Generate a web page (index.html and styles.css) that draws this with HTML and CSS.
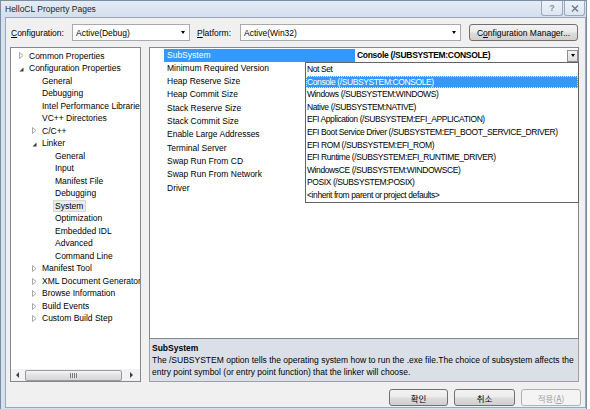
FILE: index.html
```html
<!DOCTYPE html>
<html>
<head>
<meta charset="utf-8">
<link rel="stylesheet" href="styles.css">
</head>
<body>
<div class="window">
  <div class="titlebar">
    <span class="title">HelloCL Property Pages</span>
    <div class="caption-btns">
      <span class="cbtn help">?</span>
      <span class="cbtn close"><svg width="8" height="7" viewBox="0 0 8 7"><path d="M1 0.5 L7 6.5 M7 0.5 L1 6.5" stroke="#6a7a90" stroke-width="1.4" fill="none"/></svg></span>
    </div>
  </div>
  <div class="client">
    <div class="config-row">
      <span class="lbl lbl-config"><u>C</u>onfiguration:</span>
      <div class="combo combo-config"><span>Active(Debug)</span><span class="arrow"></span></div>
      <span class="lbl lbl-platform"><u>P</u>latform:</span>
      <div class="combo combo-platform"><span>Active(Win32)</span><span class="arrow"></span></div>
      <div class="btn btn-cfgmgr">C<u>o</u>nfiguration Manager...</div>
    </div>

    <div class="main">
      <div class="tree">
        <div class="tree-items">
          <div class="ti l0"><span class="tg"><svg width="5" height="7" viewBox="0 0 5 7"><path d="M0.5 0.5 L4 3.5 L0.5 6.5 Z" fill="#fff" stroke="#a8a8a8"/></svg></span><span>Common Properties</span></div>
          <div class="ti l0"><span class="tg"><svg class="exp" width="5" height="5" viewBox="0 0 5 5"><path d="M4.5 0.5 L4.5 4.5 L0.5 4.5 Z" fill="#3a3a3a"/></svg></span><span>Configuration Properties</span></div>
          <div class="ti l1"><span class="tg"></span><span>General</span></div>
          <div class="ti l1"><span class="tg"></span><span>Debugging</span></div>
          <div class="ti l1"><span class="tg"></span><span>Intel Performance Libraries</span></div>
          <div class="ti l1"><span class="tg"></span><span>VC++ Directories</span></div>
          <div class="ti l1"><span class="tg"><svg width="5" height="7" viewBox="0 0 5 7"><path d="M0.5 0.5 L4 3.5 L0.5 6.5 Z" fill="#fff" stroke="#a8a8a8"/></svg></span><span>C/C++</span></div>
          <div class="ti l1"><span class="tg"><svg class="exp" width="5" height="5" viewBox="0 0 5 5"><path d="M4.5 0.5 L4.5 4.5 L0.5 4.5 Z" fill="#3a3a3a"/></svg></span><span>Linker</span></div>
          <div class="ti l2"><span class="tg"></span><span>General</span></div>
          <div class="ti l2"><span class="tg"></span><span>Input</span></div>
          <div class="ti l2"><span class="tg"></span><span>Manifest File</span></div>
          <div class="ti l2"><span class="tg"></span><span>Debugging</span></div>
          <div class="ti l2"><span class="tg"></span><span class="sel">System</span></div>
          <div class="ti l2"><span class="tg"></span><span>Optimization</span></div>
          <div class="ti l2"><span class="tg"></span><span>Embedded IDL</span></div>
          <div class="ti l2"><span class="tg"></span><span>Advanced</span></div>
          <div class="ti l2"><span class="tg"></span><span>Command Line</span></div>
          <div class="ti l1"><span class="tg"><svg width="5" height="7" viewBox="0 0 5 7"><path d="M0.5 0.5 L4 3.5 L0.5 6.5 Z" fill="#fff" stroke="#a8a8a8"/></svg></span><span>Manifest Tool</span></div>
          <div class="ti l1"><span class="tg"><svg width="5" height="7" viewBox="0 0 5 7"><path d="M0.5 0.5 L4 3.5 L0.5 6.5 Z" fill="#fff" stroke="#a8a8a8"/></svg></span><span>XML Document Generator</span></div>
          <div class="ti l1"><span class="tg"><svg width="5" height="7" viewBox="0 0 5 7"><path d="M0.5 0.5 L4 3.5 L0.5 6.5 Z" fill="#fff" stroke="#a8a8a8"/></svg></span><span>Browse Information</span></div>
          <div class="ti l1"><span class="tg"><svg width="5" height="7" viewBox="0 0 5 7"><path d="M0.5 0.5 L4 3.5 L0.5 6.5 Z" fill="#fff" stroke="#a8a8a8"/></svg></span><span>Build Events</span></div>
          <div class="ti l1"><span class="tg"><svg width="5" height="7" viewBox="0 0 5 7"><path d="M0.5 0.5 L4 3.5 L0.5 6.5 Z" fill="#fff" stroke="#a8a8a8"/></svg></span><span>Custom Build Step</span></div>
        </div>
        <div class="hscroll">
          <span class="sb-arrow sb-left"><span class="tri-l"></span></span>
          <span class="sb-thumb"><span class="grip"></span></span>
          <span class="sb-arrow sb-right"><span class="tri-r"></span></span>
        </div>
      </div>

      <div class="right">
        <div class="grid">
          <div class="prow selrow"><span class="gutter"></span><span class="pname">SubSystem</span><span class="pval"><b class="valtext">Console (/SUBSYSTEM:CONSOLE)</b><span class="ddbtn"><span class="arrow"></span></span></span></div>
          <div class="prow"><span class="gutter"></span><span class="pname">Minimum Required Version</span><span class="pval"></span></div>
          <div class="prow"><span class="gutter"></span><span class="pname">Heap Reserve Size</span><span class="pval"></span></div>
          <div class="prow"><span class="gutter"></span><span class="pname">Heap Commit Size</span><span class="pval"></span></div>
          <div class="prow"><span class="gutter"></span><span class="pname">Stack Reserve Size</span><span class="pval"></span></div>
          <div class="prow"><span class="gutter"></span><span class="pname">Stack Commit Size</span><span class="pval"></span></div>
          <div class="prow"><span class="gutter"></span><span class="pname">Enable Large Addresses</span><span class="pval"></span></div>
          <div class="prow"><span class="gutter"></span><span class="pname">Terminal Server</span><span class="pval"></span></div>
          <div class="prow"><span class="gutter"></span><span class="pname">Swap Run From CD</span><span class="pval"></span></div>
          <div class="prow"><span class="gutter"></span><span class="pname">Swap Run From Network</span><span class="pval"></span></div>
          <div class="prow"><span class="gutter"></span><span class="pname">Driver</span><span class="pval"></span></div>

          <div class="ddlist">
            <div class="dditem">Not Set</div>
            <div class="dditem hl">Console (/SUBSYSTEM:CONSOLE)</div>
            <div class="dditem">Windows (/SUBSYSTEM:WINDOWS)</div>
            <div class="dditem">Native (/SUBSYSTEM:NATIVE)</div>
            <div class="dditem">EFI Application (/SUBSYSTEM:EFI_APPLICATION)</div>
            <div class="dditem">EFI Boot Service Driver (/SUBSYSTEM:EFI_BOOT_SERVICE_DRIVER)</div>
            <div class="dditem">EFI ROM (/SUBSYSTEM:EFI_ROM)</div>
            <div class="dditem">EFI Runtime (/SUBSYSTEM:EFI_RUNTIME_DRIVER)</div>
            <div class="dditem">WindowsCE (/SUBSYSTEM:WINDOWSCE)</div>
            <div class="dditem">POSIX (/SUBSYSTEM:POSIX)</div>
            <div class="dditem">&lt;inherit from parent or project defaults&gt;</div>
          </div>
        </div>
        <div class="desc">
          <div class="desc-title">SubSystem</div>
          <div class="desc-text">The /SUBSYSTEM option tells the operating system how to run the .exe file.The choice of subsystem affects the<br>entry point symbol (or entry point function) that the linker will choose.</div>
        </div>
      </div>
    </div>

    <div class="dlg-btns">
      <div class="btn kbtn ok">확인</div>
      <div class="btn kbtn cancel">취소</div>
      <div class="btn kbtn apply disabled">적용(<u>A</u>)</div>
    </div>
  </div>
</div>
</body>
</html>
```
FILE: styles.css
```css
html, body {
  margin: 0;
  padding: 0;
}
body {
  width: 590px;
  height: 409px;
  overflow: hidden;
  background: #ffffff;
  font-family: "Liberation Sans", Arial, sans-serif;
  font-size: 8.5px;
  color: #000;
}
.window {
  width: 587px;
  height: 409px;
  box-sizing: border-box;
  border: 1px solid #7c8da3;
  border-bottom: none;
  background: #d6e1ee;
  display: flex;
  flex-direction: column;
}
.titlebar {
  height: 16px;
  display: flex;
  align-items: flex-start;
  background: linear-gradient(#e4ecf5, #d3dfec);
}
.title {
  margin-left: 4px;
  line-height: 16px;
  color: #1e1e1e;
}
.caption-btns {
  margin-left: auto;
  margin-right: 1px;
  display: flex;
  gap: 1px;
}
.cbtn {
  height: 15px;
  box-sizing: border-box;
  border: 1px solid #98a8bd;
  border-top: none;
  border-radius: 0 0 3px 3px;
  background: linear-gradient(#eef3f9, #dde6f1);
  display: flex;
  align-items: center;
  justify-content: center;
}
.help {
  width: 22px;
  font-weight: bold;
  font-size: 9px;
  color: #8090a6;
}
.close {
  width: 21px;
}
.client {
  margin-left: 4px;
  margin-bottom: 1px;
  width: 581px;
  flex: 1;
  box-sizing: border-box;
  border: 1px solid #9aa8ba;
  background: #f0f0f0;
  display: flex;
  flex-direction: column;
}
.config-row {
  display: flex;
  align-items: center;
  margin-top: 6px;
  height: 17px;
}
.lbl-config {
  margin-left: 5px;
  width: 61px;
}
.lbl-platform {
  margin-left: 7px;
  width: 43px;
}
.combo {
  height: 17px;
  box-sizing: border-box;
  border: 1px solid #a7a9ae;
  background: #fff;
  display: flex;
  align-items: center;
  padding-left: 3px;
}
.combo-config { width: 118px; }
.combo-platform { width: 221px; }
.combo .arrow {
  margin-left: auto;
  margin-right: 4px;
}
.arrow {
  width: 0;
  height: 0;
  border-left: 2.5px solid transparent;
  border-right: 2.5px solid transparent;
  border-top: 3px solid #000;
}
.btn {
  height: 17px;
  box-sizing: border-box;
  border: 1px solid #707070;
  border-radius: 3px;
  background: linear-gradient(#f3f3f3 0%, #ebebeb 48%, #dddddd 52%, #cfcfcf 100%);
  display: flex;
  align-items: center;
  justify-content: center;
}
.btn-cfgmgr {
  margin-left: 8px;
  width: 109px;
}
.main {
  display: flex;
  margin-top: 6px;
  height: 335px;
}
.tree {
  margin-left: 4px;
  width: 131px;
  height: 335px;
  box-sizing: border-box;
  border: 1px solid #828790;
  background: #fff;
  display: flex;
  flex-direction: column;
}
.tree-items {
  flex: 1;
  overflow: hidden;
  padding-top: 1.5px;
}
.ti {
  height: 12.52px;
  line-height: 12.52px;
  white-space: nowrap;
  display: flex;
  align-items: center;
}
.ti.l0 { padding-left: 8px; }
.ti.l1 { padding-left: 21px; }
.ti.l2 { padding-left: 34px; }
.tg {
  width: 10px;
  flex: none;
  display: flex;
  align-items: center;
}
.tg svg { display: block; }
.tg svg.exp { margin-top: 2px; }
.sel {
  line-height: 10px;
  padding: 0 2px 0 1px;
  margin-left: -2px;
  border: 1px solid #d6d6d6;
  background: #ebebeb;
}
.hscroll {
  height: 12px;
  flex: none;
  display: flex;
  align-items: center;
  background: #f2f2f2;
}
.sb-arrow {
  display: flex;
  align-items: center;
  justify-content: center;
  height: 12px;
}
.sb-left { width: 13px; }
.sb-right { flex: 1; }
.tri-l {
  width: 0; height: 0;
  border-top: 3px solid transparent;
  border-bottom: 3px solid transparent;
  border-right: 3px solid #404040;
}
.tri-r {
  width: 0; height: 0;
  border-top: 3px solid transparent;
  border-bottom: 3px solid transparent;
  border-left: 3px solid #404040;
}
.sb-thumb {
  margin-left: 1px;
  width: 97px;
  height: 11px;
  box-sizing: border-box;
  border: 1px solid #9a9a9a;
  border-radius: 2px;
  background: linear-gradient(#f4f4f4, #e2e2e2 50%, #d6d6d6);
  display: flex;
  align-items: center;
  justify-content: center;
}
.grip {
  width: 7px;
  height: 5px;
  background: repeating-linear-gradient(90deg, #7a7a7a 0 1px, transparent 1px 2px);
}
.right {
  margin-left: 8px;
  width: 430px;
  display: flex;
  flex-direction: column;
}
.grid {
  position: relative;
  height: 292px;
  box-sizing: border-box;
  border: 1px solid #828790;
  background: #fff;
  padding-top: 0.5px;
}
.prow {
  display: flex;
  height: 13.33px;
  line-height: 13.33px;
}
.gutter {
  width: 14px;
  flex: none;
}
.pname {
  width: 191px;
  flex: none;
  box-sizing: border-box;
  padding-left: 3px;
  white-space: nowrap;
  overflow: hidden;
}
.pval {
  flex: 1;
  position: relative;
  padding-left: 2px;
  white-space: nowrap;
}
.valtext {
  letter-spacing: -0.3px;
}
.selrow .pname {
  background: #3399ff;
  color: #fff;
}
.ddbtn {
  position: absolute;
  right: 0;
  top: 1px;
  width: 11px;
  height: 12px;
  box-sizing: border-box;
  border: 1px solid #8d8d8d;
  background: linear-gradient(#f4f4f4, #dcdcdc);
  display: flex;
  align-items: center;
  justify-content: center;
}
.ddlist {
  position: absolute;
  left: 155px;
  top: 14px;
  width: 274px;
  height: 141px;
  box-sizing: border-box;
  border: 1px solid #646464;
  background: #fff;
  z-index: 2;
}
.dditem {
  height: 12.6px;
  line-height: 12.6px;
  padding-left: 1px;
  white-space: nowrap;
  box-sizing: border-box;
  letter-spacing: -0.4px;
}
.dditem.hl {
  background: #3399ff;
  color: #fff;
  outline: 1px dotted #ffe7a0;
  outline-offset: -1px;
}
.desc {
  height: 43px;
  box-sizing: border-box;
  border: 1px solid #a0a0a0;
  border-top: none;
  background: #dbe0e8;
  padding: 3px 0 0 2px;
  line-height: 12px;
}
.desc-title {
  font-weight: bold;
}
.dlg-btns {
  display: flex;
  justify-content: flex-end;
  gap: 6px;
  margin-top: 7px;
  padding-right: 4px;
}
.kbtn {
  font-family: "Noto Sans CJK KR", "Liberation Sans", sans-serif;
  font-size: 8.5px;
}
.ok { width: 59px; }
.cancel { width: 61px; }
.apply { width: 60px; }
.disabled {
  border-color: #adb2b5;
  background: #f4f4f4;
  color: #a0a0a0;
}
```
